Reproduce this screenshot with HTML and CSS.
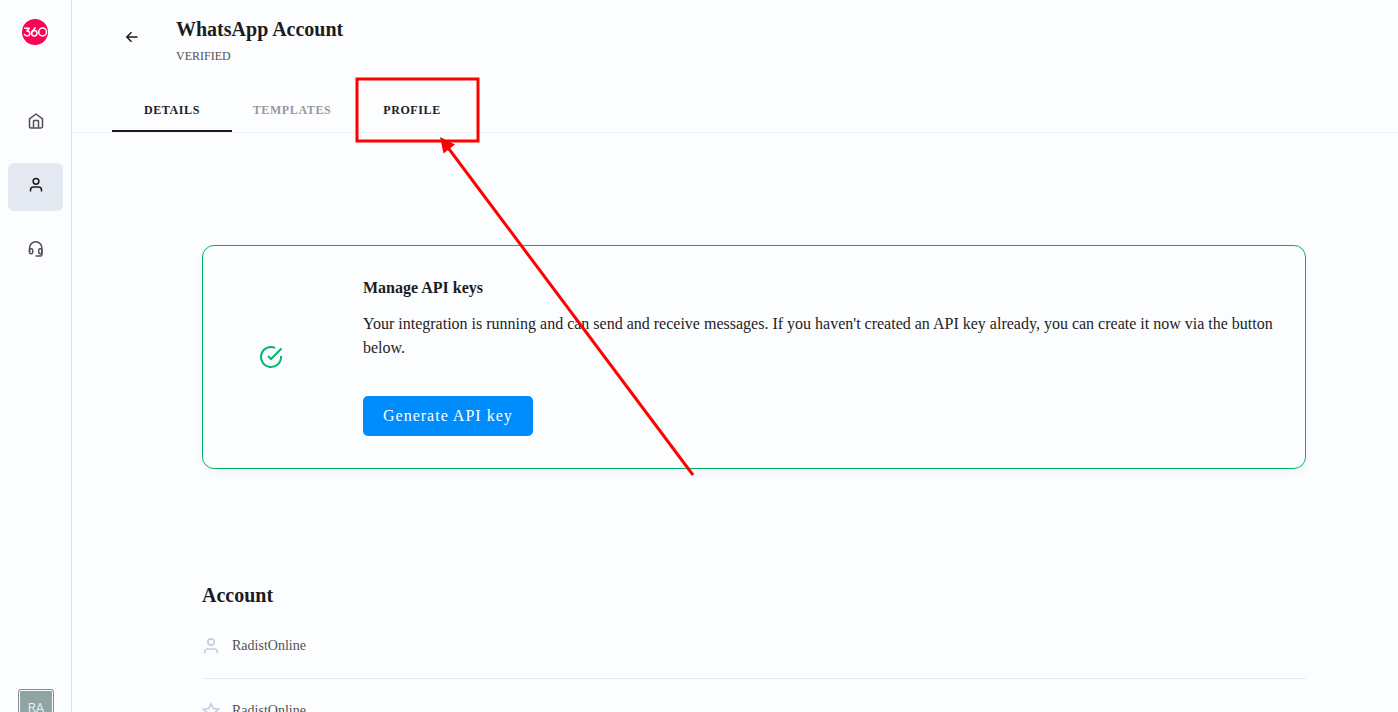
FILE: index.html
```html
<!DOCTYPE html>
<html lang="en">
  <head>
    <meta charset="UTF-8" />
    <meta name="viewport" content="width=device-width, initial-scale=1.0" />
    <title>WhatsApp Account</title>
    <link rel="stylesheet" href="styles.css">
  </head>
  <body>
    <aside class="sidebar">
      <a href="#" class="logo" aria-label="360">
        <svg viewBox="0 0 26 26" fill="none" stroke="#fff" stroke-width="1.5" stroke-linecap="round" stroke-linejoin="round">
          <circle cx="13" cy="13" r="13" fill="#ff0059" stroke="none" />
          <path d="M2.6 9.200h4.800L4.900 12c1.800 0 2.900.9 2.900 2.300s-1.100 2.600-2.700 2.600c-1.200 0-2.100-.5-2.600-1.400" />
          <path d="M13.200 8.800l-3.100 4.200" />
          <circle cx="12.300" cy="14.200" r="2.700" />
          <circle cx="20.600" cy="13" r="3.900" />
        </svg>
      </a>
      <nav class="side-nav">
        <a href="#" aria-label="Home">
          <svg class="icon" viewBox="0 0 18 18">
            <path d="M2.500 6.800L9 2l6.500 4.800v7.400a1.800 1.800 0 0 1-1.800 1.800H4.300a1.800 1.800 0 0 1-1.800-1.800z" />
            <path d="M6.500 15.800V9.200a.7.7 0 0 1 .7-.7h3.600a.7.7 0 0 1 .7.7v6.600" />
          </svg>
        </a>
        <a href="#" class="active" aria-label="Account">
          <svg class="icon" viewBox="0 0 18 18">
            <circle cx="9" cy="5.300" r="2.900" />
            <path d="M3.500 15.500v-1.500a3 3 0 0 1 3-3h5a3 3 0 0 1 3 3v1.500" />
          </svg>
        </a>
        <a href="#" aria-label="Support">
          <svg class="icon" viewBox="0 0 18 18">
            <path d="M2.500 12V8a6.200 6.200 0 0 1 12.400 0v6.600a1.500 1.500 0 0 1-1.500 1.500H8.500" />
            <rect x="2.500" y="8.700" width="3.200" height="5.100" rx="1.500" />
            <rect x="11.700" y="8.700" width="3.200" height="5.100" rx="1.500" />
          </svg>
        </a>
      </nav>
      <button type="button" class="avatar">RA</button>
    </aside>

    <main class="main">
      <header class="header">
        <a href="#" class="back" aria-label="Back">
          <svg viewBox="0 0 16 16">
            <path d="M13.500 8H3M7.500 3.300L2.800 8l4.700 4.700" />
          </svg>
        </a>
        <div>
          <h1>WhatsApp Account</h1>
          <p class="status">VERIFIED</p>
        </div>
      </header>

      <nav class="tabs">
        <a href="#" class="tab selected">DETAILS</a>
        <a href="#" class="tab">TEMPLATES</a>
        <a href="#" class="tab dark">PROFILE</a>
      </nav>

      <div class="content">
        <section class="api-card">
          <div class="api-status">
            <svg viewBox="0 0 24 24">
              <path d="M22 11.080V12a10 10 0 1 1-5.930-9.140" />
              <path d="M22.500 3.500L12 14.010l-3-3" />
            </svg>
          </div>
          <div class="api-text">
            <h2>Manage API keys</h2>
            <p>Your integration is running and can send and receive messages. If you haven't created an API key already, you can create it now via the button below.</p>
            <button type="button" class="generate-btn">Generate API key</button>
          </div>
        </section>

        <section class="account">
          <h2>Account</h2>
          <ul>
            <li>
              <svg viewBox="0 0 18 18">
                <circle cx="9" cy="5" r="3.100" />
                <path d="M2.700 16.500v-1.500a3 3 0 0 1 3-3h6.600a3 3 0 0 1 3 3v1.500" />
              </svg>
              <span>RadistOnline</span>
            </li>
            <li>
              <svg viewBox="0 0 18 18">
                <path d="M9 1.800l2.300 4.700 5.200.7-3.800 3.600.9 5.200L9 13.500 4.400 16l.9-5.200L1.500 7.200l5.200-.7z" />
              </svg>
              <span>RadistOnline</span>
            </li>
          </ul>
        </section>
      </div>

      <!-- Highlight around the profile tab -->
      <svg class="highlight" viewBox="0 0 420 490" aria-hidden="true">
        <rect x="285" y="79" width="121" height="62" fill="none" stroke="#f00" stroke-width="3" />
        <path d="M621 475L374 145" fill="none" stroke="#f00" stroke-width="3" />
        <path d="M368 137l15 7.500-11.500 9z" fill="#f00" />
      </svg>
    </main>
  </body>
</html>
```
FILE: styles.css
```css
* {
  box-sizing: border-box;
}

body {
  margin: 0;
  display: flex;
  height: 100vh;
  overflow: hidden;
  background-color: #fcfdff;
  color: #1c1c1e;
  font-family: "Liberation Serif", "Times New Roman", serif;
}

h1,
h2,
p,
ul {
  margin: 0;
  padding: 0;
}

a {
  color: inherit;
  text-decoration: none;
}

svg {
  display: block;
}

/* Sidebar */
.sidebar {
  flex: 0 0 72px;
  display: flex;
  flex-direction: column;
  padding: 19px 8px 0;
  border-right: 1px solid #dfe1e6;
}

.logo {
  width: 26px;
  margin-left: 14px;
}

.side-nav {
  display: flex;
  flex-direction: column;
  gap: 16px;
  margin-top: 54px;
}

.side-nav a {
  display: flex;
  align-items: center;
  justify-content: center;
  height: 48px;
  padding-bottom: 4px;
  border-radius: 6px;
  color: #505054;
}

.side-nav .active {
  background-color: #e4e9f2;
  color: #1c1c1e;
}

.icon {
  width: 18px;
  height: 18px;
  fill: none;
  stroke: currentColor;
  stroke-width: 1.5;
  stroke-linejoin: round;
}

.avatar {
  flex-shrink: 0;
  width: 36px;
  height: 36px;
  margin: auto auto -13px 10px;
  padding: 0;
  border: 1px solid #858b8b;
  border-radius: 3px;
  box-shadow: inset 0 0 0 1px #fff;
  background-color: #90a4a4;
  color: #e6eeee;
  font-family: Roboto, sans-serif;
  font-size: 13px;
}

/* Main area */
.main {
  position: relative;
  flex: 1;
  min-width: 0;
}

.header {
  display: flex;
  gap: 36px;
  padding: 17px 52px 0;
}

.back svg {
  width: 16px;
  height: 16px;
  margin-top: 12px;
  fill: none;
  stroke: #1c1c1e;
  stroke-width: 1.5;
}

h1 {
  font-size: 20px;
  line-height: 24px;
}

.status {
  margin-top: 7px;
  font-size: 12px;
  line-height: 16px;
  color: #505054;
}

.tabs {
  display: flex;
  margin-top: 24px;
  padding-left: 40px;
  border-bottom: 1px solid #eff1f4;
}

.tab {
  min-width: 120px;
  height: 44px;
  border-bottom: 2px solid transparent;
  color: #98989b;
  font-size: 12px;
  font-weight: bold;
  line-height: 44px;
  letter-spacing: 0.05em;
  text-align: center;
}

.tab.selected {
  border-color: #1c1c1e;
}

.tab.selected,
.tab.dark {
  color: #1c1c1e;
}

.content {
  padding: 112px 92px 0 130px;
}

.api-card {
  display: flex;
  gap: 24px;
  padding: 32px 32px 32px 0;
  border: 1px solid #00b562;
  border-radius: 12px;
  box-shadow: 0 4px 10px rgba(40, 60, 90, 0.04);
}

.api-status {
  flex: 0 0 136px;
  display: flex;
  align-items: center;
  justify-content: center;
}

.api-status svg {
  width: 24px;
  height: 24px;
  fill: none;
  stroke: #00b86b;
  stroke-width: 2;
}

.api-text h2 {
  margin-bottom: 14px;
  font-size: 16px;
  line-height: 20px;
}

.api-text p {
  font-size: 16px;
  line-height: 24px;
}

.generate-btn {
  display: block;
  height: 40px;
  margin-top: 36px;
  padding: 0 20px;
  border: none;
  border-radius: 5px;
  background-color: #008cfa;
  color: #fff;
  font-family: inherit;
  font-size: 16px;
  letter-spacing: 1px;
  cursor: pointer;
}

.account {
  margin-top: 114px;
}

.account h2 {
  margin-bottom: 7px;
  font-size: 20px;
  line-height: 24px;
}

.account ul {
  list-style: none;
}

.account li {
  display: flex;
  align-items: center;
  gap: 12px;
  height: 65px;
  border-bottom: 1px solid #e4e9f2;
  color: #505054;
  font-size: 14px;
}

.account li svg {
  width: 18px;
  height: 18px;
  fill: none;
  stroke: #c5cee0;
  stroke-width: 1.7;
}

.highlight {
  position: absolute;
  top: 0;
  left: 0;
  width: 420px;
  height: 490px;
  overflow: visible;
  pointer-events: none;
}
```
